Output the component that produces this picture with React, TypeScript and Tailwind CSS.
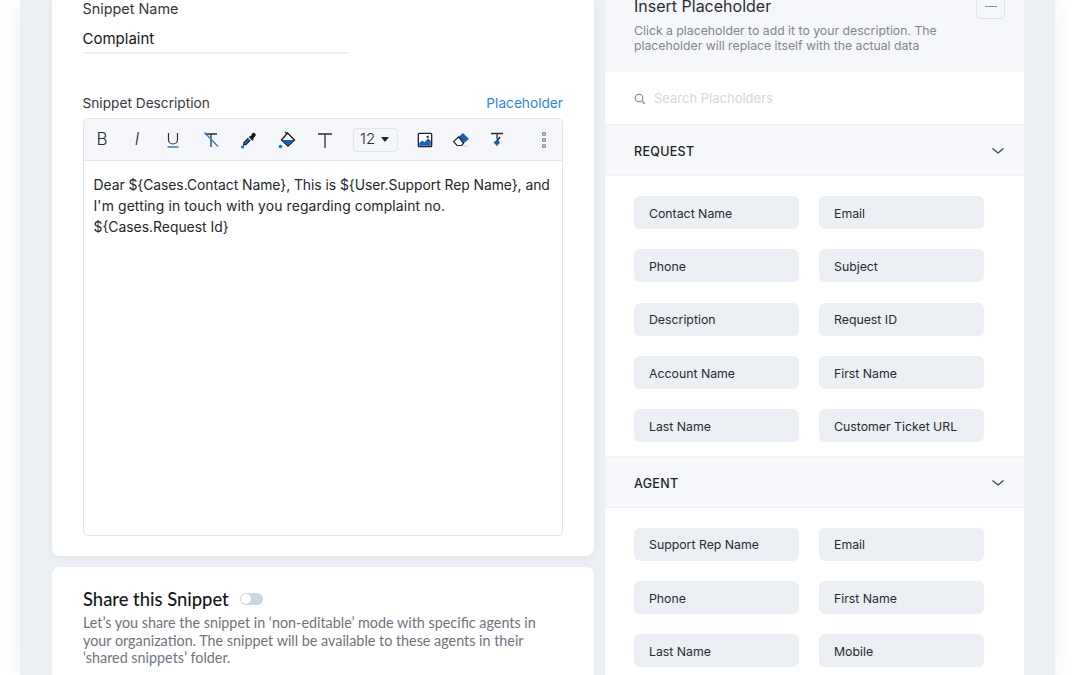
import React from 'react';

const request = [
  ['Contact Name', 'Email'],
  ['Phone', 'Subject'],
  ['Description', 'Request ID'],
  ['Account Name', 'First Name'],
  ['Last Name', 'Customer Ticket URL'],
];

const agent = [
  ['Support Rep Name', 'Email'],
  ['Phone', 'First Name'],
  ['Last Name', 'Mobile'],
];

const Chevron = () => (
  <svg width="14" height="8" viewBox="0 0 14 8" fill="none" stroke="#3a3f4a" strokeWidth="1.2" className="-mt-[3px]">
    <path d="M1.5 1.5 7 6l5.5-4.5" />
  </svg>
);

const SectionBar = ({ title }: { title: string }) => (
  <div className="flex h-[52px] items-center justify-between border-y border-[#eef1f5] bg-[#f5f7fb] pl-[29px] pr-[19px] pt-[5px]">
    <span className="text-[12.5px] font-medium tracking-[0.3px] text-[#1c1f26]">{title}</span>
    <Chevron />
  </div>
);

const ChipGrid = ({ rows }: { rows: string[][] }) => (
  <div className="grid w-[350px] grid-cols-[165px_165px] gap-x-[20px] gap-y-[20.3px] pl-[29px] pt-[20px] pb-[13.5px]">
    {rows.flat().map((label, i) => (
      <div key={i} className="flex h-[33px] items-center rounded-[6px] bg-[#ecf0f4] pl-[15px] pt-[3px] text-[12.3px] text-[#262a33]">
        {label}
      </div>
    ))}
  </div>
);

const Toolbar = () => (
  <div className="flex h-[42px] items-center rounded-t-[5px] border-b border-[#e3e7ef] bg-[#f5f7fb] pl-[9.5px]">
    <span className="flex w-[18px] justify-center text-[17px] font-light text-[#2a2d33]">B</span>
    <span className="ml-[17px] flex w-[18px] justify-center text-[17px] font-light italic text-[#2a2d33]">I</span>
    <svg width="18" height="18" viewBox="0 0 18 18" fill="none" className="ml-[18px]">
      <path d="M4.5 2v6.5a4.5 4.5 0 0 0 9 0V2" stroke="#2a2d33" strokeWidth="1.2" />
      <path d="M3.5 16h11" stroke="#2f7ee0" strokeWidth="1.5" />
    </svg>
    <svg width="18" height="18" viewBox="0 0 18 18" fill="none" className="ml-[20px]">
      <path d="M3 3h12M9 3v13" stroke="#2a2d33" strokeWidth="1.3" />
      <path d="M2.5 1.5 16 15.5" stroke="#2f7ee0" strokeWidth="1.4" />
    </svg>
    <svg width="18" height="18" viewBox="0 0 18 18" className="ml-[20px]">
      <path d="M12 2.5a2 2 0 0 1 3 3l-2 2 .8.8-1.4 1.4-3.6-3.6 1.4-1.4.8.8z" fill="#14161a" />
      <path d="M8.3 7.2 4 11.5 3.5 14l2.5-.5 4.3-4.3" fill="#1d6fd8" stroke="#14161a" strokeWidth="1.1" />
      <circle cx="2.6" cy="16" r="1.6" fill="#1d6fd8" />
    </svg>
    <svg width="18" height="18" viewBox="0 0 18 18" className="ml-[20px]">
      <path d="M9.5 2 16.5 9l-6.5 6L3.5 9z" fill="#fff" stroke="#14161a" strokeWidth="1.3" />
      <path d="M3.8 9h12.4L10 14.8z" fill="#1a5fb8" />
      <path d="M7 1l2.5 2" stroke="#14161a" strokeWidth="1.2" />
      <circle cx="2.5" cy="15.5" r="1.8" fill="#1d6fd8" />
    </svg>
    <svg width="18" height="18" viewBox="0 0 18 18" fill="none" className="ml-[20px]">
      <path d="M2 3h14M9 3v14" stroke="#2a2d33" strokeWidth="1.3" />
    </svg>
    <div className="ml-[19px] flex h-[24px] w-[45px] items-center rounded-[4px] border border-[#e1e5ec] pl-[6px] text-[15px] font-light text-[#2a2d33]">
      12
      <svg width="8" height="5" viewBox="0 0 8 5" className="ml-[6px]">
        <path d="M0 0h8L4 5z" fill="#20232a" />
      </svg>
    </div>
    <svg width="16" height="16" viewBox="0 0 18 18" className="ml-[19px] mr-[1px]">
      <rect x="1.5" y="1.5" width="15" height="15" rx="1" fill="#fff" stroke="#20232a" strokeWidth="1.5" />
      <path d="M2.5 15.5v-3l3.5-3 2.5 2 4-4.5 3 3v5.5z" fill="#1a5fb8" />
      <circle cx="12" cy="5.5" r="1.3" fill="#20232a" />
    </svg>
    <svg width="18" height="18" viewBox="0 0 18 18" className="ml-[18px]">
      <path d="M6.5 6 11 2l6 6-5.5 4.5z" fill="#1a5fb8" />
      <path d="M6.5 6 1.5 10.5 5 14.5h4.5l2-2z" fill="#fff" stroke="#20232a" strokeWidth="1.2" />
      <path d="M10 15h6" stroke="#c9ced6" strokeWidth="1" />
    </svg>
    <svg width="18" height="18" viewBox="0 0 18 18" fill="none" className="ml-[18px]">
      <path d="M3 2.5h12M9 2.5V8" stroke="#2a2d33" strokeWidth="1.3" />
      <path d="M6 10.5 9.5 14l3-3.5-3-3z" fill="#1a5fb8" transform="translate(-0.5 1)" />
      <path d="M12 6 9 10" stroke="#14161a" strokeWidth="1.3" />
    </svg>
    <svg width="6" height="18" viewBox="0 0 6 18" fill="none" stroke="#6d727c" strokeWidth="1.1" className="ml-[35px]">
      <circle cx="3" cy="3" r="1.5" />
      <circle cx="3" cy="9" r="1.5" />
      <circle cx="3" cy="15" r="1.5" />
    </svg>
  </div>
);

const App: React.FC = () => {
  return (
    <div className="h-[675px] w-[1080px] overflow-hidden bg-white font-['Inter',sans-serif]">
      <div className="ml-[20px] flex h-[675px] w-[1035px] gap-[11px] bg-[#ecf0f5] pl-[32px] shadow-[0_0_24px_rgba(30,40,70,0.07)]">
        {/* left column */}
        <div className="flex w-[542px] flex-col gap-[11px]">
          <div className="h-[556px] rounded-b-[8px] bg-white pl-[30.5px] pr-[31px] shadow-[0_2px_8px_rgba(40,50,80,0.05)]">
            <div className="pt-[1px] text-[14.4px] leading-[16px] text-[#33373f]">Snippet Name</div>
            <div className="mt-[12px] w-[267px] border-b-2 border-[#eef1f5] pb-[3px] text-[15px] leading-[20px] text-[#16181d]">
              Complaint
            </div>
            <div className="mt-[41px] flex items-center justify-between text-[13.7px] leading-[16px]">
              <span className="text-[#33373f]">Snippet Description</span>
              <span className="text-[#2f86e8]">Placeholder</span>
            </div>
            <div className="mt-[7px] h-[418px] rounded-[5px] border border-[#dfe3ea]">
              <Toolbar />
              <div className="px-[10px] pt-[14px] text-[13.9px] leading-[21px] whitespace-nowrap text-[#23262c]">
                <div className="tracking-[-0.05px]">
                  Dear {'${Cases.Contact Name}'}, This is {'${User.Support Rep Name}'}, and
                </div>
                <div className="tracking-[0.13px]">I'm getting in touch with you regarding complaint no.</div>
                <div>{'${Cases.Request Id}'}</div>
              </div>
            </div>
          </div>
          <div className="flex-1 rounded-t-[8px] bg-white px-[31px] pt-[20px] font-['Lato',sans-serif]">
            <div className="flex items-center">
              <span className="text-[18.4px] leading-[24px] font-medium text-[#14161a]">Share this Snippet</span>
              <span className="ml-[11px] flex h-[12px] w-[23px] items-center rounded-full bg-[#cdd5e3] pl-[1px]">
                <span className="h-[10px] w-[10px] rounded-full bg-white" />
              </span>
            </div>
            <p className="mt-[3px] w-[470px] text-[14.35px] leading-[17.5px] text-[#6f7480]">
              Let’s you share the snippet in ‘non-editable’ mode with specific agents in your organization. The snippet
              will be available to these agents in their ‘shared snippets’ folder.
            </p>
          </div>
        </div>

        {/* right column */}
        <div className="w-[419px] overflow-hidden bg-white">
          <div className="relative h-[72px] bg-[#f5f7fb] pl-[29px]">
            <div className="h-[20px] -translate-y-[4px] text-[16px] leading-[20px] text-[#2a2d33]">Insert Placeholder</div>
            <p className="mt-[3px] text-[12.25px] leading-[15px] text-[#81868f]">
              Click a placeholder to add it to your description. The
              <br />
              placeholder will replace itself with the actual data
            </p>
            <div className="absolute top-[-11px] right-[19px] flex h-[30px] w-[29px] items-center justify-center rounded-[4px] border border-[#dfe3ea]">
              <span className="mt-[4px] h-px w-[12px] bg-[#8a8f98]" />
            </div>
          </div>
          <div className="flex h-[52px] items-center pl-[29px] pt-[1px]">
            <svg width="12" height="12" viewBox="0 0 12 12" fill="none" stroke="#7d828c" strokeWidth="1.1">
              <circle cx="5" cy="5" r="3.8" />
              <path d="m8 8 3 3" />
            </svg>
            <span className="ml-[8px] text-[13px] text-[#d3d8e2]">Search Placholders</span>
          </div>
          <SectionBar title="REQUEST" />
          <ChipGrid rows={request} />
          <SectionBar title="AGENT" />
          <ChipGrid rows={agent} />
        </div>
      </div>
    </div>
  );
};

export default App;
